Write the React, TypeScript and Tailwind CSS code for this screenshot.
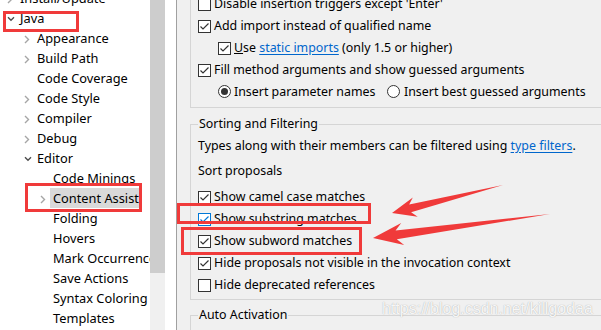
import React from "react";

type TreeNode = {
  label: string;
  level: 0 | 1 | 2;
  chev?: "right" | "down";
  selected?: boolean;
};

const TREE: TreeNode[] = [
  { label: "Install/Update", level: 0, chev: "right" },
  { label: "Java", level: 0, chev: "down" },
  { label: "Appearance", level: 1, chev: "right" },
  { label: "Build Path", level: 1, chev: "right" },
  { label: "Code Coverage", level: 1 },
  { label: "Code Style", level: 1, chev: "right" },
  { label: "Compiler", level: 1, chev: "right" },
  { label: "Debug", level: 1, chev: "right" },
  { label: "Editor", level: 1, chev: "down" },
  { label: "Code Minings", level: 2 },
  { label: "Content Assist", level: 2, chev: "right", selected: true },
  { label: "Folding", level: 2 },
  { label: "Hovers", level: 2 },
  { label: "Mark Occurrences", level: 2 },
  { label: "Save Actions", level: 2 },
  { label: "Syntax Coloring", level: 2 },
  { label: "Templates", level: 2 },
];

const INDENT = ["pl-[7px]", "pl-[24px]", "pl-[40px]"];

function Chevron({ dir }: { dir?: "right" | "down" }) {
  return (
    <span className="w-[10px] h-[20px] flex items-center shrink-0">
      {dir === "right" && (
        <svg width="6" height="9" viewBox="0 0 6 9" className="mt-[2px]">
          <path d="M1 1l3.5 3.5L1 8" fill="none" stroke="#a6a6a6" strokeWidth="1.4" />
        </svg>
      )}
      {dir === "down" && (
        <svg width="8" height="6" viewBox="0 0 8 6" className="mt-[2px]">
          <path d="M1 1.3l3 3 3-3" fill="none" stroke="#4d4d4d" strokeWidth="1.4" />
        </svg>
      )}
    </span>
  );
}

function Check({ checked, focus }: { checked?: boolean; focus?: boolean }) {
  const color = focus ? "#0078d7" : "#333333";
  return (
    <span
      className={`w-[13px] h-[13px] shrink-0 bg-white border flex items-center justify-center ${
        focus ? "border-[#0078d7]" : "border-[#333333]"
      }`}
    >
      {checked && (
        <svg width="11" height="11" viewBox="0 0 11 11">
          <path d="M1.5 5.5L4 8l5.5-5.5" fill="none" stroke={color} strokeWidth="1.2" />
        </svg>
      )}
    </span>
  );
}

function Radio({ on }: { on?: boolean }) {
  return (
    <span className="w-[13px] h-[13px] shrink-0 rounded-full bg-white border border-[#333333] flex items-center justify-center">
      {on && <span className="w-[7px] h-[7px] rounded-full bg-[#333333]" />}
    </span>
  );
}

function Row({
  checked,
  focus,
  indent,
  children,
}: {
  checked?: boolean;
  focus?: boolean;
  indent?: boolean;
  children: React.ReactNode;
}) {
  return (
    <div className={`flex items-center h-[22px] gap-[3px] whitespace-nowrap ${indent ? "pl-[27px]" : "pl-[7px]"}`}>
      <Check checked={checked} focus={focus} />
      <span>{children}</span>
    </div>
  );
}

function Link({ children }: { children: React.ReactNode }) {
  return <span className="text-[#0066cc] underline underline-offset-2">{children}</span>;
}

// polygon for a tapered annotation arrow, tip -> tail
function arrowPoints(
  tip: [number, number],
  tail: [number, number],
  headLen: number,
  headHalf: number,
  neckHalf: number
) {
  const dx = tail[0] - tip[0];
  const dy = tail[1] - tip[1];
  const len = Math.hypot(dx, dy);
  const ux = dx / len;
  const uy = dy / len;
  const nx = -uy;
  const ny = ux;
  const p = (a: number, b: number) =>
    `${(tip[0] + ux * a + nx * b).toFixed(1)},${(tip[1] + uy * a + ny * b).toFixed(1)}`;
  return [
    p(0, 0),
    p(headLen, headHalf),
    p(headLen * 0.78, neckHalf),
    `${tail[0]},${tail[1]}`,
    p(headLen * 0.78, -neckHalf),
    p(headLen, -headHalf),
  ].join(" ");
}

const RED = "border-[#f03a3a]";

export default function App() {
  return (
    <div className="relative w-[601px] h-[330px] overflow-hidden flex bg-[#f0f0f0] text-black font-['Noto_Sans',sans-serif]">
      {/* preference tree */}
      <div className="w-[150px] shrink-0 bg-white overflow-hidden text-[12.8px]">
        <div className="-mt-[12px]">
          {TREE.map((n) => (
            <div key={n.label} className={`flex items-center h-[20px] whitespace-nowrap ${INDENT[n.level]}`}>
              <Chevron dir={n.chev} />
              <span className={`pl-[3px] pr-[2px] leading-[20px] ${n.selected ? "bg-[#d9d9d9]" : ""}`}>
                {n.label}
              </span>
            </div>
          ))}
        </div>
      </div>

      {/* scrollbar */}
      <div className="w-[15px] shrink-0 flex flex-col">
        <div className="h-[273px] bg-[#cdcdcd]" />
        <div className="flex-1 bg-[#f0f0f0]" />
      </div>
      <div className="w-[11px] shrink-0 bg-white" />

      {/* content assist page */}
      <div className="flex-1 border-l border-[#a0a0a0] pl-[13px] overflow-hidden text-[12.4px]">
        <div className="-mt-[7px] border-l border-b border-[#d5d5d5] pb-[4px]">
          <Row>Disable insertion triggers except 'Enter'</Row>
          <Row checked>Add import instead of qualified name</Row>
          <Row checked indent>
            <span className="underline">U</span>se <Link>static imports</Link> (only 1.5 or higher)
          </Row>
          <Row checked>Fill method arguments and show guessed arguments</Row>
          <div className="flex items-center h-[22px] pl-[27px] whitespace-nowrap">
            <div className="w-[169px] flex items-center gap-[3px]">
              <Radio on />
              <span>Insert parameter names</span>
            </div>
            <div className="flex items-center gap-[4px]">
              <Radio />
              <span>Insert best guessed arguments</span>
            </div>
          </div>
        </div>

        <fieldset className="mt-[7px] border-l border-t border-b border-[#d5d5d5] pb-[3px]">
          <legend className="ml-[7px] px-[1px] leading-[18px]">Sorting and Filtering</legend>
          <div className="flex items-center h-[22px] mt-[2px] pl-[7px] whitespace-nowrap">
            <span>
              Types along with their members can be filtered using <Link>type filters</Link>.
            </span>
          </div>
          <div className="flex items-center h-[22px] mt-[3px] pl-[7px]">Sort proposals</div>
          <div className="mt-[4px]">
            <Row checked>Show camel case matches</Row>
            <Row checked focus>Show substring matches</Row>
            <Row checked>Show subword matches</Row>
            <Row checked>Hide proposals not visible in the invocation context</Row>
            <Row>Hide deprecated references</Row>
          </div>
        </fieldset>

        <fieldset className="mt-[6px] border-l border-t border-[#d5d5d5] h-[60px]">
          <legend className="ml-[7px] px-[1px] leading-[18px]">Auto Activation</legend>
        </fieldset>
      </div>

      {/* annotations */}
      <div className={`absolute left-[3px] top-[11px] w-[76px] h-[21px] border-[3px] ${RED}`} />
      <div className={`absolute left-[25px] top-[183px] w-[117px] h-[29px] border-[3px] ${RED}`} />
      <div className={`absolute left-[177px] top-[203px] w-[194px] h-[21px] border-[3px] ${RED}`} />
      <div className={`absolute left-[181px] top-[227px] w-[181px] h-[28px] border-[3px] ${RED}`} />
      <svg className="absolute inset-0 pointer-events-none" width="601" height="330">
        <polygon points={arrowPoints([392, 213], [503, 185], 24, 10, 4)} fill="#f03a3a" />
        <polygon points={arrowPoints([373, 238], [550, 214], 30, 11, 4.5)} fill="#f03a3a" />
      </svg>

      <div className="absolute left-[382px] top-[300px] text-[16px] leading-[18px] text-white/90 font-['Liberation_Sans',sans-serif] [text-shadow:0_0_1px_#9a9a9a] pointer-events-none">
        https://blog.csdn.net/killgodaa
      </div>
    </div>
  );
}
